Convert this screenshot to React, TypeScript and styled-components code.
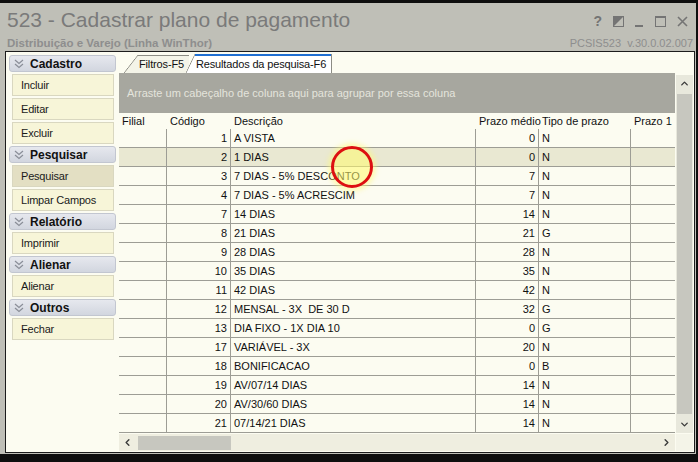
import React from 'react'
import styled, { createGlobalStyle } from 'styled-components'
import { ChevronUp, ChevronDown, ChevronLeft, ChevronRight } from 'lucide-react'

const GlobalStyle = createGlobalStyle`
  body {
    margin: 0;
    font-family: "Liberation Sans", Arial, sans-serif;
  }
`

const menu = [
  { title: 'Cadastro', items: ['Incluir', 'Editar', 'Excluir'] },
  { title: 'Pesquisar', items: ['Pesquisar', 'Limpar Campos'], active: 'Pesquisar' },
  { title: 'Relatório', items: ['Imprimir'] },
  { title: 'Alienar', items: ['Alienar'] },
  { title: 'Outros', items: ['Fechar'] },
]

const rows: [number, string, number, string][] = [
  [1, 'A VISTA', 0, 'N'],
  [2, '1 DIAS', 0, 'N'],
  [3, '7 DIAS - 5% DESCONTO', 7, 'N'],
  [4, '7 DIAS - 5% ACRESCIM', 7, 'N'],
  [7, '14 DIAS', 14, 'N'],
  [8, '21 DIAS', 21, 'G'],
  [9, '28 DIAS', 28, 'N'],
  [10, '35 DIAS', 35, 'N'],
  [11, '42 DIAS', 42, 'N'],
  [12, 'MENSAL - 3X  DE 30 D', 32, 'G'],
  [13, 'DIA FIXO - 1X DIA 10', 0, 'G'],
  [17, 'VARIÁVEL - 3X', 20, 'N'],
  [18, 'BONIFICACAO', 0, 'B'],
  [19, 'AV/07/14 DIAS', 14, 'N'],
  [20, 'AV/30/60 DIAS', 14, 'N'],
  [21, '07/14/21 DIAS', 14, 'N'],
]

const columns = '48px 64px 245px 63px 92px 1fr'

const App = () => {
  return (
    <Screen>
      <GlobalStyle />
      <Window>
        <TitleBar>
          <div>
            <Title>523 - Cadastrar plano de pagamento</Title>
            <Subtitle>Distribuição e Varejo (Linha WinThor)</Subtitle>
          </div>
          <TitleRight>
            <WinButtons>
              <Help>?</Help>
              <svg width="11" height="11" viewBox="0 0 11 11">
                <rect x="0.5" y="0.5" width="10" height="10" fill="none" stroke="#747474" />
                <polygon points="0,0 11,0 0,11" fill="#747474" />
              </svg>
              <svg width="9" height="11" viewBox="0 0 9 11">
                <rect x="0" y="9" width="8" height="2" fill="#747474" />
              </svg>
              <svg width="11" height="11" viewBox="0 0 11 11">
                <rect x="0.5" y="0.5" width="10" height="10" fill="none" stroke="#747474" />
                <rect x="0" y="0" width="11" height="2" fill="#747474" />
              </svg>
              <svg width="11" height="11" viewBox="0 0 11 11">
                <path d="M1 1 L10 10 M10 1 L1 10" stroke="#747474" strokeWidth="1.6" />
              </svg>
            </WinButtons>
            <Version>PCSIS523  v.30.0.02.007</Version>
          </TitleRight>
        </TitleBar>

        <Content>
          <Sidebar>
            {menu.map(group => (
              <React.Fragment key={group.title}>
                <GroupHeader>
                  <svg width="10" height="10" viewBox="0 0 10 10">
                    <path d="M1 1 L5 4.5 L9 1 M1 5 L5 8.5 L9 5" fill="none" stroke="#8a8e98" strokeWidth="1.2" />
                  </svg>
                  {group.title}
                </GroupHeader>
                {group.items.map(item => (
                  <MenuItem key={item} $active={group.active === item}>{item}</MenuItem>
                ))}
              </React.Fragment>
            ))}
          </Sidebar>

          <Main>
            <TabStrip>
              <Tab $slant={14}>Filtros-F5</Tab>
              <Tab $slant={9} $active>Resultados da pesquisa-F6</Tab>
            </TabStrip>

            <GridWrap>
              <TableArea>
                <GroupBand>Arraste um cabeçalho de coluna aqui para agrupar por essa coluna</GroupBand>
                <HeaderRow>
                  <HeadCell>Filial</HeadCell>
                  <HeadCell>Código</HeadCell>
                  <HeadCell>Descrição</HeadCell>
                  <HeadCell $right>Prazo médio</HeadCell>
                  <HeadCell>Tipo de prazo</HeadCell>
                  <HeadCell>Prazo 1</HeadCell>
                </HeaderRow>
                {rows.map(([code, desc, prazo, tipo]) => (
                  <Row key={code} $selected={code === 2}>
                    <Cell />
                    <Cell $right>{code}</Cell>
                    <Cell>{desc}</Cell>
                    <Cell $right>{prazo}</Cell>
                    <Cell>{tipo}</Cell>
                    <Cell $last />
                  </Row>
                ))}
              </TableArea>

              <VScroll>
                <ScrollArrow><ChevronUp size={11} strokeWidth={3} /></ScrollArrow>
                <VThumb />
                <ScrollArrow><ChevronDown size={11} strokeWidth={3} /></ScrollArrow>
              </VScroll>

              <HScroll>
                <ScrollArrow><ChevronLeft size={11} strokeWidth={3} /></ScrollArrow>
                <HThumb />
                <HSpacer />
                <ScrollArrow><ChevronRight size={11} strokeWidth={3} /></ScrollArrow>
              </HScroll>
              <Corner />
            </GridWrap>
          </Main>
        </Content>
      </Window>
      <ClickMark />
    </Screen>
  )
}

const Screen = styled.div`
  position: relative;
  width: 698px;
  height: 462px;
  background: #0e0e0e;
  overflow: hidden;
`

const Window = styled.div`
  width: 696px;
  height: 451px;
  margin-top: 3px;
  background: #bfbfb7;
  display: flex;
  flex-direction: column;
`

const TitleBar = styled.div`
  height: 48px;
  display: flex;
  justify-content: space-between;
  padding: 0 3px 0 7px;
`

const Title = styled.div`
  font-size: 21px;
  line-height: 24px;
  margin-top: 5px;
  color: #7a7a7a;
  white-space: nowrap;
`

const Subtitle = styled.div`
  font-size: 11.5px;
  font-weight: bold;
  line-height: 13px;
  margin-top: 5px;
  color: #8e8e8e;
  white-space: nowrap;
`

const TitleRight = styled.div`
  display: flex;
  flex-direction: column;
  align-items: flex-end;
`

const WinButtons = styled.div`
  display: flex;
  align-items: center;
  gap: 11px;
  height: 14px;
  margin-top: 11px;
  padding-right: 5px;
`

const Help = styled.span`
  font-size: 14px;
  font-weight: bold;
  color: #747474;
  line-height: 14px;
`

const Version = styled.div`
  margin-top: 9px;
  font-size: 11px;
  line-height: 13px;
  color: #8e8e8e;
  white-space: pre;
`

const Content = styled.div`
  box-sizing: border-box;
  width: 690px;
  height: 402px;
  margin-left: 5px;
  border: 1px solid #1c1c1c;
  background: #fcfcf1;
  display: flex;
`

const Sidebar = styled.div`
  box-sizing: border-box;
  width: 112px;
  flex: none;
  padding: 3px 0 0 3px;
  display: flex;
  flex-direction: column;
  align-items: flex-start;
`

const GroupHeader = styled.div`
  box-sizing: border-box;
  width: 107px;
  height: 17px;
  margin-bottom: 2px;
  display: flex;
  align-items: center;
  gap: 6px;
  padding-left: 4px;
  border: 1px solid #c2c6d0;
  border-radius: 3px;
  background: linear-gradient(#e6e8ee, #d2d6df);
  font-size: 12px;
  font-weight: bold;
  color: #111;
`

const MenuItem = styled.div<{ $active?: boolean }>`
  box-sizing: border-box;
  width: 102px;
  height: 22px;
  margin: 0 0 2px 3px;
  padding-left: 8px;
  display: flex;
  align-items: center;
  border: 1px solid #d9d7c0;
  background: ${p => (p.$active ? '#e3dfc3' : '#f7f5d8')};
  font-size: 11px;
  letter-spacing: -0.2px;
  color: #1a1a1a;
`

const Main = styled.div`
  flex: 1;
  display: flex;
  flex-direction: column;
  min-width: 0;
`

const TabStrip = styled.div`
  height: 21px;
  flex: none;
  display: flex;
  align-items: flex-end;
  padding-left: 6px;
`

const Tab = styled.div<{ $active?: boolean; $slant: number }>`
  box-sizing: border-box;
  height: ${p => (p.$active ? 19 : 18)}px;
  padding: 0 5px 0 ${p => p.$slant + 1}px;
  margin-left: ${p => (p.$active ? -3 : 0)}px;
  display: flex;
  align-items: center;
  font-size: 11px;
  letter-spacing: -0.15px;
  color: #111;
  white-space: nowrap;
  border-right: ${p => (p.$active ? '1px solid #8c8c84' : 'none')};
  background:
    linear-gradient(${p => (p.$active ? '#1f6fd2' : '#8c8c84')}, ${p => (p.$active ? '#1f6fd2' : '#8c8c84')})
      ${p => p.$slant}px 0 / calc(100% - ${p => p.$slant}px) ${p => (p.$active ? 2 : 1)}px no-repeat,
    linear-gradient(to bottom right, transparent calc(50% - 0.6px), #8c8c84 50%, ${p => (p.$active ? '#ffffff' : '#f4f4e8')} calc(50% + 0.8px))
      0 0 / ${p => p.$slant}px 100% no-repeat,
    linear-gradient(${p => (p.$active ? '#ffffff' : '#f4f4e8')}, ${p => (p.$active ? '#ffffff' : '#f4f4e8')})
      ${p => p.$slant}px 0 / calc(100% - ${p => p.$slant}px) 100% no-repeat;
`

const GridWrap = styled.div`
  flex: 1;
  display: grid;
  grid-template-columns: 556px 17px;
  grid-template-rows: 360px 17px;
  column-gap: 1px;
  row-gap: 1px;
  padding-left: 1px;
`

const TableArea = styled.div`
  overflow: hidden;
  display: flex;
  flex-direction: column;
`

const GroupBand = styled.div`
  height: 40px;
  flex: none;
  display: flex;
  align-items: center;
  padding-left: 8px;
  background: #a7a79f;
  color: #e4e4dc;
  font-size: 11px;
  white-space: nowrap;
`

const HeaderRow = styled.div`
  height: 16px;
  flex: none;
  display: grid;
  grid-template-columns: ${columns};
`

const HeadCell = styled.div<{ $right?: boolean }>`
  padding: 0 3px;
  font-size: 11px;
  line-height: 16px;
  color: #111;
  white-space: nowrap;
  text-align: ${p => (p.$right ? 'right' : 'left')};
`

const Row = styled.div<{ $selected?: boolean }>`
  height: 19px;
  flex: none;
  display: grid;
  grid-template-columns: ${columns};
  background: ${p => (p.$selected ? '#e9e8d2' : 'transparent')};
`

const Cell = styled.div<{ $right?: boolean; $last?: boolean }>`
  box-sizing: border-box;
  padding: 0 3px;
  border-bottom: 1px solid #9d9d95;
  border-right: ${p => (p.$last ? 'none' : '1px solid #9d9d95')};
  font-size: 11px;
  line-height: 18px;
  color: #111;
  white-space: pre;
  overflow: hidden;
  text-align: ${p => (p.$right ? 'right' : 'left')};
`

const VScroll = styled.div`
  margin-top: 2px;
  display: flex;
  flex-direction: column;
  background: #e8e8dc;
`

const ScrollArrow = styled.div`
  width: 17px;
  height: 17px;
  flex: none;
  display: flex;
  align-items: center;
  justify-content: center;
  color: #3a3a3a;
`

const VThumb = styled.div`
  flex: 1;
  margin: 2px 1px;
  background: #c7c7bf;
`

const HScroll = styled.div`
  display: flex;
  align-items: center;
  background: #efeee0;
`

const HThumb = styled.div`
  width: 93px;
  height: 14px;
  margin-left: 2px;
  background: #c7c7bf;
`

const HSpacer = styled.div`
  flex: 1;
`

const Corner = styled.div`
  background: #f4f4e8;
`

const ClickMark = styled.div`
  position: absolute;
  left: 331px;
  top: 146px;
  width: 42px;
  height: 42px;
  box-sizing: border-box;
  border: 3px solid #dd1010;
  border-radius: 50%;
  background: rgba(255, 250, 110, 0.55);
  box-shadow: 0 0 5px 3px rgba(255, 250, 120, 0.55);
`

export default App
